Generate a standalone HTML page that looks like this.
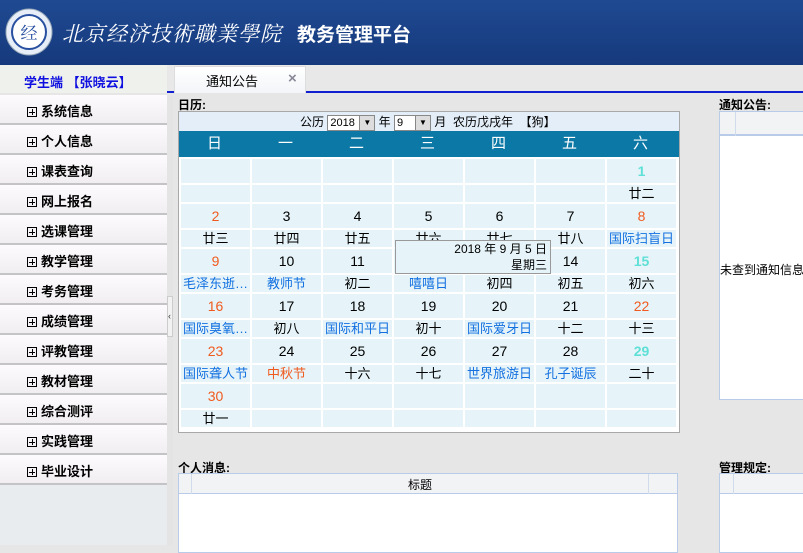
<!DOCTYPE html>
<html><head><meta charset="utf-8"><style>
*{margin:0;padding:0;box-sizing:border-box}
body{width:803px;height:545px;overflow:hidden;background:#e6e6e6;font-family:"Liberation Sans","Noto Sans CJK SC",sans-serif;font-size:13px;position:relative;color:#000}
.a{position:absolute}
#hdr{left:0;top:0;width:803px;height:65px;background:linear-gradient(#1f4a92,#16397c)}
#bar{left:0;top:65px;width:803px;height:28px;background:#e8e8e8;border-bottom:2px solid #1020d0}
.side{left:0;width:167px;height:30px;background:linear-gradient(#fdfbfd,#f1eef1);border-bottom:2px solid #c4c4c6}
.side span{position:absolute;left:27px;top:6px;font-weight:bold;font-size:13px}
.side i{display:inline-block;width:10px;height:10px;border:1px solid #000;position:relative;margin-right:4px;vertical-align:-1px}
.side i:before{content:"";position:absolute;left:1px;top:3.5px;width:6px;height:1px;background:#000}
.side i:after{content:"";position:absolute;left:3.5px;top:1px;width:1px;height:6px;background:#000}
.lbl{font-weight:bold;font-size:12px}
.cell{position:absolute;width:69px;background:#e6f4f9;text-align:center;font-size:13px}
.n{height:24px;line-height:24px;font-size:14px}
.l{height:17px;line-height:17px}
.o{color:#f05a1e}.c{color:#5fe0d6;font-weight:bold}.b{color:#1270e0}
</style></head><body>
<div id="hdr" class="a">
 <svg class="a" style="left:4px;top:7px" width="50" height="50"><circle cx="25" cy="25" r="23" fill="#e8eef8" stroke="#9ab" stroke-width="1"/><circle cx="25" cy="25" r="17" fill="#fff" stroke="#2850a0" stroke-width="2"/><text x="25" y="32" font-size="17" text-anchor="middle" fill="#2850a0" font-family="Noto Serif CJK SC,serif">经</text></svg>
 <div class="a" style="left:62px;top:18px;color:#fff;font-size:21px;font-family:'Noto Serif CJK SC',serif;letter-spacing:1px;font-style:italic;white-space:nowrap">北京经济技術職業學院</div>
 <div class="a" style="left:297px;top:20px;color:#fff;font-size:19px;font-weight:bold;white-space:nowrap">教务管理平台</div>
</div>
<div id="bar" class="a"></div>
<div class="a" style="left:0;top:65px;width:167px;height:28px;background:#eff2ec"></div>
<div class="a" style="left:24px;top:72px;color:#1010e0;font-weight:bold;font-size:13px">学生端 【张晓云】</div>
<div class="a" style="left:174px;top:66px;width:132px;height:27px;background:linear-gradient(#fff,#f3f5f8);border:1px solid #ddd;border-bottom:none"></div>
<div class="a" style="left:206px;top:71px;font-size:13px">通知公告</div>
<div class="a" style="left:288px;top:70px;font-size:15px;color:#889;font-weight:bold">×</div>

<div class="a" style="left:0;top:95px;width:167px;height:450px;background:#e8ecef"></div>
<div class="side a" style="top:95px"><span><i></i>系统信息</span></div>
<div class="side a" style="top:125px"><span><i></i>个人信息</span></div>
<div class="side a" style="top:155px"><span><i></i>课表查询</span></div>
<div class="side a" style="top:185px"><span><i></i>网上报名</span></div>
<div class="side a" style="top:215px"><span><i></i>选课管理</span></div>
<div class="side a" style="top:245px"><span><i></i>教学管理</span></div>
<div class="side a" style="top:275px"><span><i></i>考务管理</span></div>
<div class="side a" style="top:305px"><span><i></i>成绩管理</span></div>
<div class="side a" style="top:335px"><span><i></i>评教管理</span></div>
<div class="side a" style="top:365px"><span><i></i>教材管理</span></div>
<div class="side a" style="top:395px"><span><i></i>综合测评</span></div>
<div class="side a" style="top:425px"><span><i></i>实践管理</span></div>
<div class="side a" style="top:455px"><span><i></i>毕业设计</span></div>
<div class="a" style="left:167px;top:95px;width:6px;height:450px;background:#e4e4e4"></div>
<div class="a" style="left:167px;top:296px;width:6px;height:41px;background:#f2f2f2;border:1px solid #ccc;font-size:9px;line-height:38px;color:#333">‹</div>

<div class="a lbl" style="left:178px;top:96px">日历:</div>
<div class="a" style="left:178px;top:111px;width:502px;height:322px;border:1px solid #a8a8a8;background:#fff"></div>
<div class="a" style="left:179px;top:112px;width:500px;height:19px;background:#e4eef8"></div>
<div class="a" style="left:300px;top:113px;font-size:12px;white-space:nowrap">公历 <span style="display:inline-block;width:48px;height:16px;background:#fff;border:1px solid #888;vertical-align:middle;font-size:11px;line-height:14px;padding-left:2px;position:relative">2018<b style="position:absolute;right:0;top:0;width:15px;height:14px;background:#ddd;border-left:1px solid #888;font-size:8px;text-align:center">▼</b></span> 年 <span style="display:inline-block;width:37px;height:16px;background:#fff;border:1px solid #888;vertical-align:middle;font-size:11px;line-height:14px;padding-left:2px;position:relative">9<b style="position:absolute;right:0;top:0;width:15px;height:14px;background:#ddd;border-left:1px solid #888;font-size:8px;text-align:center">▼</b></span> 月 &nbsp;农历戊戌年 &nbsp;【狗】</div>
<div class="a" style="left:179px;top:131px;width:500px;height:26px;background:#0c78a6;color:#fff;font-size:15px;display:flex;line-height:26px">
<div style="width:71px;text-align:center">日</div><div style="width:71px;text-align:center">一</div><div style="width:71px;text-align:center">二</div><div style="width:71px;text-align:center">三</div><div style="width:71px;text-align:center">四</div><div style="width:71px;text-align:center">五</div><div style="width:71px;text-align:center">六</div></div>
<div id="cal"></div>
<script>
var d=[
[["",""],["",""],["",""],["",""],["",""],["",""],["1c","廿二"]],
[["2o","廿三"],["3","廿四"],["4","廿五"],["5","廿六"],["6","廿七"],["7","廿八"],["8o","国际扫盲日b"]],
[["9o","毛泽东逝…b"],["10","教师节b"],["11","初二"],["12","嘻嘻日b"],["13","初四"],["14","初五"],["15c","初六"]],
[["16o","国际臭氧…b"],["17","初八"],["18","国际和平日b"],["19","初十"],["20","国际爱牙日b"],["21","十二"],["22o","十三"]],
[["23o","国际聋人节b"],["24","中秋节o"],["25","十六"],["26","十七"],["27","世界旅游日b"],["28","孔子诞辰b"],["29c","二十"]],
[["30o","廿一"],["",""],["",""],["",""],["",""],["",""],["",""]]];
var h="";
function sp(s){var m=s.match(/^(.*?)([ocb]?)$/);return m;}
for(var r=0;r<6;r++)for(var c=0;c<7;c++){var x=181+c*71,y=159+r*45;var a=sp(d[r][c][0]),b=sp(d[r][c][1]);
h+='<div class="cell n '+a[2]+'" style="left:'+x+'px;top:'+y+'px">'+a[1]+'</div>';
h+='<div class="cell l '+b[2]+'" style="left:'+x+'px;top:'+(y+26)+'px">'+b[1]+'</div>';}
document.getElementById('cal').innerHTML=h;
</script>
<div class="a" style="left:395px;top:240px;width:156px;height:34px;background:#e6f4f9;border:1px solid #999;text-align:right;padding-right:3px;font-size:12px;line-height:16px">2018 年 9 月 5 日<br>星期三</div>

<div class="a lbl" style="left:719px;top:96px">通知公告:</div>
<div class="a" style="left:719px;top:111px;width:90px;height:289px;background:#fff;border:1px solid #b8cbe8"></div>
<div class="a" style="left:720px;top:112px;width:90px;height:24px;background:#f2f3f5;border-bottom:2px solid #b8cbe8"></div>
<div class="a" style="left:735px;top:112px;width:1px;height:24px;background:#d0dcec"></div>
<div class="a" style="left:720px;top:261px;font-size:12px;white-space:nowrap">未查到通知信息</div>

<div class="a lbl" style="left:178px;top:459px">个人消息:</div>
<div class="a" style="left:178px;top:473px;width:500px;height:80px;background:#fff;border:1px solid #b8cbe8"></div>
<div class="a" style="left:179px;top:474px;width:498px;height:20px;background:#f2f3f5;border-bottom:1px solid #b8cbe8"></div>
<div class="a" style="left:191px;top:474px;width:1px;height:20px;background:#d0dcec"></div>
<div class="a" style="left:648px;top:474px;width:1px;height:20px;background:#d0dcec"></div>
<div class="a" style="left:408px;top:476px;font-size:12px">标题</div>

<div class="a lbl" style="left:719px;top:459px">管理规定:</div>
<div class="a" style="left:719px;top:473px;width:90px;height:80px;background:#fff;border:1px solid #b8cbe8"></div>
<div class="a" style="left:720px;top:474px;width:90px;height:20px;background:#f2f3f5;border-bottom:1px solid #b8cbe8"></div>
<div class="a" style="left:733px;top:474px;width:1px;height:20px;background:#d0dcec"></div>
</body></html>
